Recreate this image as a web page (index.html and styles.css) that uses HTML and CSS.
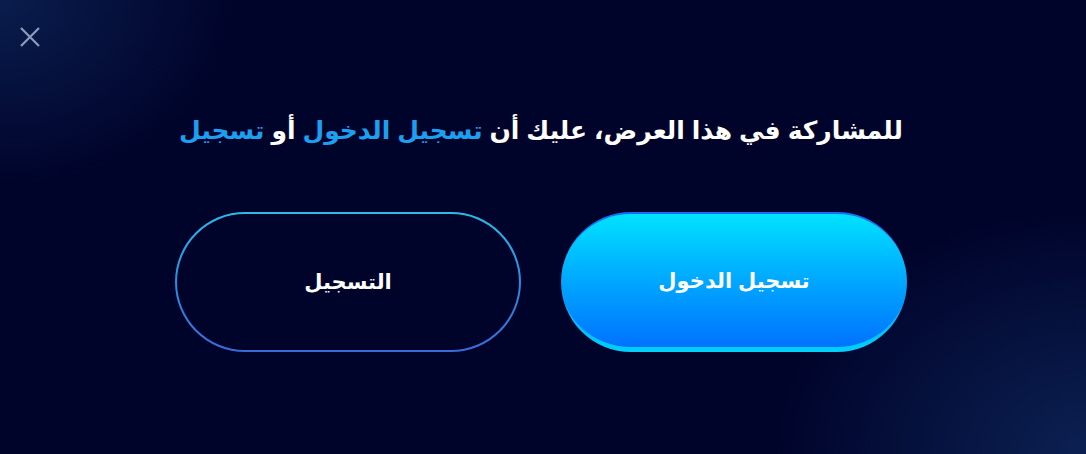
FILE: index.html
```html
<!DOCTYPE html>
<html lang="ar" dir="rtl">
<head>
<meta charset="utf-8">
<title>تسجيل</title>
<link rel="stylesheet" href="styles.css">
</head>
<body>
<div class="page">
  <button class="close" aria-label="close">
    <svg width="22" height="22" viewBox="0 0 22 22"><path d="M2 2 L20 20 M20 2 L2 20" stroke="#8c9cba" stroke-width="2.2" fill="none"/></svg>
  </button>
  <main class="content">
    <p class="message">للمشاركة في هذا العرض، عليك أن <a class="link">تسجيل الدخول</a> أو <a class="link">تسجيل</a></p>
    <div class="actions">
      <button class="btn btn-primary">تسجيل الدخول</button>
      <button class="btn btn-outline">التسجيل</button>
    </div>
  </main>
</div>
</body>
</html>
```
FILE: styles.css
```css
* { box-sizing: border-box; }
html, body { margin: 0; height: 100%; }
body {
  font-family: "Liberation Sans", "DejaVu Sans", Arial, sans-serif;
  background-color: #00032a;
  background-image:
    radial-gradient(ellipse 240px 190px at 0% 0%, rgba(14, 40, 92, 0.7), rgba(14, 40, 92, 0) 100%),
    radial-gradient(ellipse 320px 250px at 100% 100%, rgba(14, 40, 92, 0.8), rgba(14, 40, 92, 0) 100%);
  overflow: hidden;
}
.page {
  position: relative;
  width: 1086px;
  height: 454px;
}
.close {
  position: absolute;
  left: 19px;
  top: 26px;
  width: 22px;
  height: 22px;
  padding: 0;
  border: 0;
  background: none;
  display: flex;
}
.content {
  display: flex;
  flex-direction: column;
  align-items: center;
  padding-top: 110px;
  padding-right: 4px;
}
.message {
  margin: 0;
  color: #ffffff;
  font-weight: bold;
  font-size: 25px;
  line-height: 40px;
  text-align: center;
}
.link { color: #1c9ff0; }
.actions {
  display: flex;
  gap: 40px;
  margin-top: 62px;
}
.btn {
  width: 346px;
  height: 140px;
  border-radius: 70px;
  font-family: inherit;
  font-weight: bold;
  font-size: 21px;
  color: #ffffff;
  display: flex;
  align-items: center;
  justify-content: center;
  padding: 0;
}
.btn-primary {
  border-style: solid;
  border-color: transparent;
  border-width: 2px 0 5px 0;
  background:
    linear-gradient(180deg, #00e2ff 0%, #00a8ff 50%, #0072ff 100%) padding-box,
    linear-gradient(180deg, #1a6cf2 0%, #00d0ff 100%) border-box;
}
.btn-outline {
  border: 2px solid transparent;
  background:
    linear-gradient(#00032a, #00032a) padding-box,
    linear-gradient(180deg, #2bbbe9 0%, #2a8ee2 50%, #3a6ad8 100%) border-box;
}
```
